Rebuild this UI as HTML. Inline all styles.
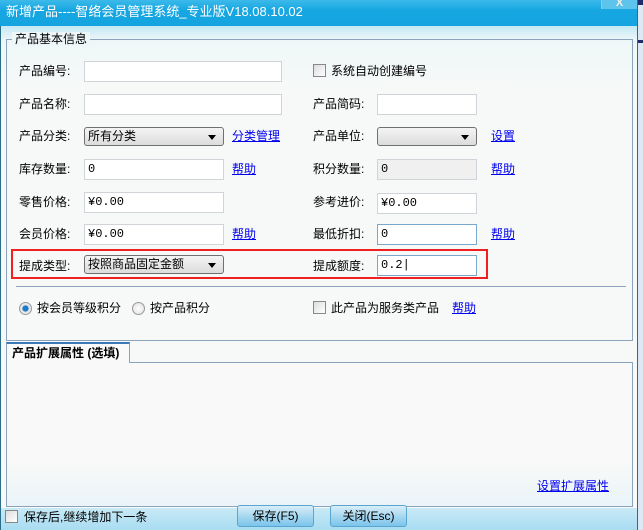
<!DOCTYPE html>
<html><head><meta charset="utf-8"><style>
*{margin:0;padding:0;box-sizing:border-box}
body{width:643px;height:530px;overflow:hidden;position:relative;font-family:"Liberation Sans","Noto Sans CJK SC",sans-serif;font-size:12px;color:#000;background:#f4f8f8}
.a{position:absolute}
.title{left:0;top:0;width:637px;height:26px;background:linear-gradient(#3cbaea,#16a6e2 40%,#14a4e0);color:#fff;font-size:13px;line-height:24px;padding-left:6px}
.body{left:0;top:26px;width:637px;height:504px;background:linear-gradient(#c4e8f4 0,#eef7f8 14px,#f6f9f8 60px,#f8f9f8);border-left:1px solid #2a6e8a}
.lbl{font-size:12px;line-height:14px}
.in{background:#fff;border:1px solid #d0d4d8;height:21px;font-size:12px;line-height:19px;padding-left:3px;font-family:"Liberation Mono","Noto Sans CJK SC",monospace}
.sel{border:1px solid #707070;border-radius:3px;height:19px;background:linear-gradient(#f4f4f4,#dcdcdc);line-height:17px;padding-left:3px}
.sel:after{content:"";position:absolute;right:7px;top:7px;border-left:4px solid transparent;border-right:4px solid transparent;border-top:5px solid #000}
.lnk{color:#0000ee;text-decoration:underline}
.cb{width:13px;height:13px;border:1px solid #888;background:linear-gradient(135deg,#ddd,#fff)}
.rd{width:13px;height:13px;border-radius:50%;border:1px solid #999;background:radial-gradient(#fff,#ddd)}
.btn{height:22px;border:1px solid #5aa6d0;border-radius:3px;background:linear-gradient(#d8eef8,#a8d8f0 50%,#7cc4ec);text-align:center;line-height:20px}
</style></head><body>
<div class="a title">新增产品----智络会员管理系统_专业版V18.08.10.02</div>
<div class="a" style="left:601px;top:0;width:36px;height:9px;background:#5fc4ec;border-left:1px solid #7ccfee;color:#eee;font-size:11px;line-height:6px;text-align:center;font-weight:bold">X</div>
<div class="a" style="left:637px;top:0;width:6px;height:530px;background:#dce8f4;border-left:1px solid #2a6e8a"></div>
<div class="a" style="left:638px;top:0;width:5px;height:5px;background:#1c2c6c"></div>
<div class="a" style="left:638px;top:40px;width:5px;height:3px;background:#1c2c6c"></div>
<div class="a body"></div>
<div class="a" style="left:6px;top:39px;width:627px;height:302px;border:1px solid #8aa4bc"></div>
<div class="a lbl" style="left:12px;top:32px;background:#eef7f8;padding:0 3px">产品基本信息</div>

<div class="a lbl" style="left:19px;top:64px">产品编号:</div>
<div class="a in" style="left:84px;top:61px;width:198px"></div>
<div class="a cb" style="left:313px;top:64px"></div>
<div class="a lbl" style="left:331px;top:64px">系统自动创建编号</div>

<div class="a lbl" style="left:19px;top:97px">产品名称:</div>
<div class="a in" style="left:84px;top:94px;width:198px"></div>
<div class="a lbl" style="left:313px;top:97px">产品简码:</div>
<div class="a in" style="left:377px;top:94px;width:100px"></div>

<div class="a lbl" style="left:19px;top:129px">产品分类:</div>
<div class="a sel" style="left:84px;top:127px;width:140px">所有分类</div>
<div class="a lbl lnk" style="left:232px;top:129px">分类管理</div>
<div class="a lbl" style="left:313px;top:129px">产品单位:</div>
<div class="a sel" style="left:377px;top:127px;width:100px"></div>
<div class="a lbl lnk" style="left:491px;top:129px">设置</div>

<div class="a lbl" style="left:19px;top:162px">库存数量:</div>
<div class="a in" style="left:84px;top:159px;width:140px">0</div>
<div class="a lbl lnk" style="left:232px;top:162px">帮助</div>
<div class="a lbl" style="left:313px;top:162px">积分数量:</div>
<div class="a in" style="left:377px;top:159px;width:100px;background:#f0f0f0">0</div>
<div class="a lbl lnk" style="left:491px;top:162px">帮助</div>

<div class="a lbl" style="left:19px;top:195px">零售价格:</div>
<div class="a in" style="left:84px;top:192px;width:140px">¥0.00</div>
<div class="a lbl" style="left:313px;top:195px">参考进价:</div>
<div class="a in" style="left:377px;top:193px;width:100px">¥0.00</div>

<div class="a lbl" style="left:19px;top:227px">会员价格:</div>
<div class="a in" style="left:84px;top:224px;width:140px">¥0.00</div>
<div class="a lbl lnk" style="left:232px;top:227px">帮助</div>
<div class="a lbl" style="left:313px;top:227px">最低折扣:</div>
<div class="a in" style="left:377px;top:224px;width:100px;border-color:#7aa8cc">0</div>
<div class="a lbl lnk" style="left:491px;top:227px">帮助</div>

<div class="a" style="left:11px;top:249px;width:477px;height:30px;border:2px solid #f02020"></div>
<div class="a lbl" style="left:19px;top:259px">提成类型:</div>
<div class="a sel" style="left:84px;top:255px;width:140px">按照商品固定金额</div>
<div class="a lbl" style="left:313px;top:259px">提成额度:</div>
<div class="a in" style="left:377px;top:255px;width:100px;border-color:#7aa8cc">0.2|</div>

<div class="a" style="left:16px;top:286px;width:610px;height:1px;background:#8aa4bc"></div>
<div class="a rd" style="left:19px;top:302px;background:radial-gradient(#1a7cc8 35%,#e8e8e8 45%)"></div>
<div class="a lbl" style="left:37px;top:301px">按会员等级积分</div>
<div class="a rd" style="left:132px;top:302px"></div>
<div class="a lbl" style="left:150px;top:301px">按产品积分</div>
<div class="a cb" style="left:313px;top:301px"></div>
<div class="a lbl" style="left:331px;top:301px">此产品为服务类产品</div>
<div class="a lbl lnk" style="left:452px;top:301px">帮助</div>

<div class="a" style="left:6px;top:362px;width:627px;height:145px;border:1px solid #8aa4bc;background:linear-gradient(#f8f9f8 70%,#eaf4f8)"></div>
<div class="a" style="left:6px;top:342px;width:124px;height:21px;border:1px solid #8aa4bc;border-top:2px solid #3a78b8;border-bottom:none;background:#f8f9f8;font-weight:bold;font-size:12px;line-height:18px;padding-left:5px">产品扩展属性 (选填)</div>
<div class="a lbl lnk" style="left:537px;top:479px">设置扩展属性</div>

<div class="a" style="left:1px;top:508px;width:636px;height:22px;background:linear-gradient(#c8eaf6,#a8dcf2)"></div>
<div class="a cb" style="left:5px;top:510px"></div>
<div class="a lbl" style="left:24px;top:510px">保存后,继续增加下一条</div>
<div class="a btn" style="left:237px;top:505px;width:77px">保存(F5)</div>
<div class="a btn" style="left:330px;top:505px;width:77px">关闭(Esc)</div>
</body></html>
